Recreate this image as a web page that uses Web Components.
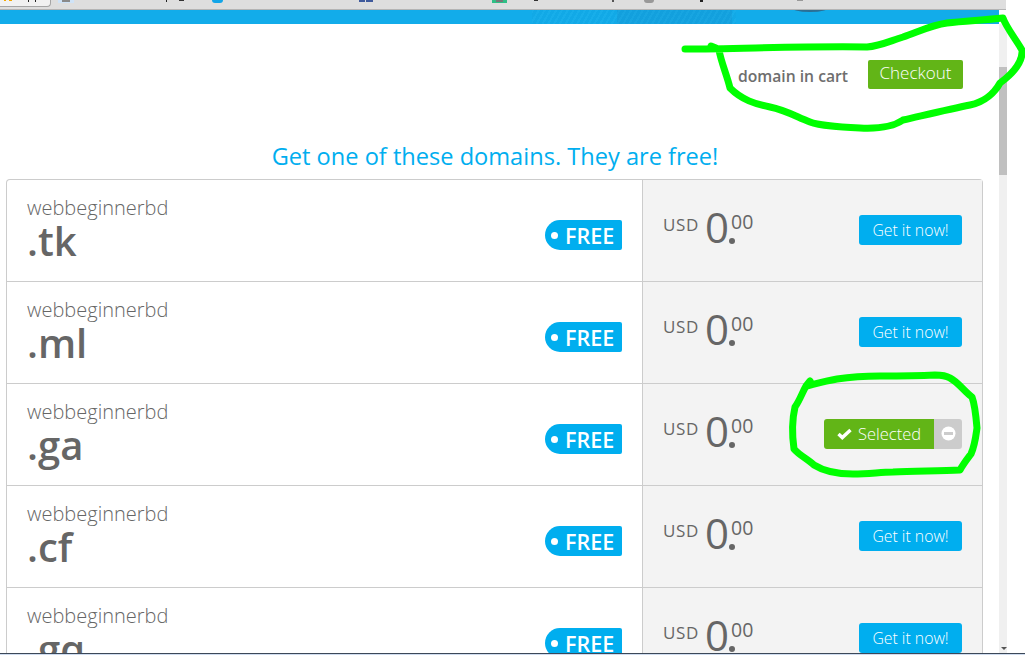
<!DOCTYPE html>
<html>
<head>
<meta charset="utf-8">
<title>Free domains</title>
<style>
	html,body{margin:0;padding:0;background:#fff;}
	body{width:1025px;height:655px;overflow:hidden;position:relative;display:flex;flex-direction:column;font-family:"Open Sans","Liberation Sans",sans-serif;color:#666;}
</style>
</head>
<body>
<top-strip></top-strip>
<blue-band></blue-band>
<page-view>
	<cart-bar></cart-bar>
	<domain-table>
		<domain-row tld=".tk"></domain-row>
		<domain-row tld=".ml"></domain-row>
		<domain-row tld=".ga" selected></domain-row>
		<domain-row tld=".cf"></domain-row>
		<domain-row tld=".gq"></domain-row>
	</domain-table>
</page-view>
<task-edge></task-edge>
<scribble-layer></scribble-layer>

<script>
function def(name, html, init){
	customElements.define(name, class extends HTMLElement {
		constructor(){
			super();
			this.attachShadow({mode:'open'}).innerHTML = html;
		}
		connectedCallback(){
			if(init) init.call(this, this.shadowRoot);
		}
	});
}

// remains of the browser bookmarks bar, cut off by the screenshot
def('top-strip', `<style>
	:host{display:block;height:10px;box-sizing:border-box;background:#dedede;border-bottom:1px solid #b4b4b4;width:1006px;position:relative;overflow:hidden;flex:none;}
	i{position:absolute;top:0;display:block;}
</style>
<i style="left:0;width:50px;height:6px;background:#f1f1f1;border:1px solid #a5a5a5;border-top:0;border-left:0;border-radius:0 0 4px 0;"></i>
<i style="left:4px;width:2px;height:1px;background:#f5a800;"></i>
<i style="left:9px;width:3px;height:1px;background:#f5a800;"></i>
<i style="left:28px;width:1px;height:2px;background:#222;"></i>
<i style="left:35px;width:1px;height:2px;background:#222;"></i>
<i style="left:58px;width:16px;height:3px;background:#cfe3f7;"></i>
<i style="left:62px;width:8px;height:2px;background:#8a8a8a;"></i>
<i style="left:166px;width:1px;height:2px;background:#222;"></i>
<i style="left:179px;width:5px;height:1px;background:#333;"></i>
<i style="left:212px;width:11px;height:3px;background:#12a5e8;border-radius:0 0 6px 6px;"></i>
<i style="left:359px;width:14px;height:2px;background:#3f5a9c;"></i>
<i style="left:365px;width:1px;height:2px;background:#dedede;"></i>
<i style="left:492px;width:15px;height:3px;background:#2fbf86;"></i>
<i style="left:496px;width:7px;height:2px;background:#777;"></i>
<i style="left:534px;width:4px;height:1px;background:#333;"></i>
<i style="left:612px;width:2px;height:2px;background:#555;"></i>
<i style="left:644px;width:10px;height:3px;background:#999;border-radius:0 0 5px 5px;"></i>
<i style="left:700px;width:3px;height:2px;background:#222;"></i>
<i style="left:797px;width:6px;height:1px;background:#999;"></i>
`);

def('blue-band', `<style>
	:host{display:block;height:14px;width:999px;background:#12acea;position:relative;overflow:hidden;flex:none;}
	.tex{position:absolute;left:532px;top:0;width:204px;height:14px;background:repeating-linear-gradient(120deg,rgba(255,255,255,.025) 0 2px,rgba(0,70,120,.03) 2px 5px);}
	.blk{position:absolute;left:617px;top:0;width:115px;height:14px;background:rgba(30,90,150,.1);}
	.arc{position:absolute;left:790px;top:-9px;width:40px;height:11px;background:#2b6f95;border-radius:50%;}
</style><div class="tex"></div><div class="blk"></div><div class="arc"></div>`);

def('page-view', `<style>
	:host{display:flex;flex:1;min-height:0;overflow:hidden;}
	.main{width:999px;flex:none;overflow:hidden;}
	.bar{width:8px;flex:none;background:#f0f0f0;padding-top:43px;box-sizing:border-box;position:relative;}
	.bar b{display:block;width:8px;height:108px;background:#c0c0c0;}
	.bar u{position:absolute;left:2px;bottom:3px;border:3px solid transparent;border-top:3px solid #555;border-bottom:0;}
</style><div class="main"><slot></slot></div><div class="bar"><b></b><u></u></div>`);

def('cart-bar', `<style>
	:host{display:block;height:155px;box-sizing:border-box;}
	.top{display:flex;justify-content:flex-end;align-items:center;height:30px;padding:35px 36px 0 0;gap:20px;}
	span{font-size:15.7px;font-weight:600;color:#6e6e6e;position:relative;top:2px;}
	a{width:95px;height:29px;box-sizing:border-box;background:#62b517;border-radius:2px;color:#fff;font-size:17px;font-weight:300;line-height:25px;text-align:center;}
	h2{margin:0;padding-top:51px;padding-right:9px;text-align:center;font-size:23.6px;font-weight:400;line-height:32px;color:#00aeef;}
</style>
<div class="top"><span>domain in cart</span><a>Checkout</a></div>
<h2>Get one of these domains. They are free!</h2>`);

def('domain-table', `<style>
	:host{display:block;width:977px;margin-left:6px;box-sizing:border-box;border:1px solid #ccc;border-bottom:0;border-radius:4px 4px 0 0;}
</style><slot></slot>`);

def('free-tag', `<style>
	:host{display:flex;align-items:center;width:77px;height:30px;box-sizing:border-box;background:#00aeef;border-radius:15px 2px 2px 15px;color:#fff;font-size:21.5px;font-weight:600;padding-left:6px;gap:7px;}
	i{width:7px;height:7px;border-radius:50%;background:#fff;flex:none;}
</style><i></i><span>FREE</span>`);

def('price-tag', `<style>
	:host{display:flex;align-items:flex-start;color:#666;}
	.cur{font-size:17px;line-height:20px;margin-top:21px;letter-spacing:.6px;width:42px;}
	.int{font-size:42px;line-height:62px;margin-top:2px;width:26px;font-weight:400;}
	.dec{display:flex;flex-direction:column;}
	.dec b{font-weight:400;font-size:19.5px;line-height:20px;margin-top:18px;}
	.dec i{width:6px;height:6px;border-radius:50%;background:#666;margin:6px 0 0 -2px;}
</style><div class="cur">USD</div><div class="int">0</div><div class="dec"><b>00</b><i></i></div>`);

def('get-button', `<style>
	:host{display:block;width:103px;height:30px;background:#00aeef;border-radius:3px;color:#fff;font-size:15.8px;font-weight:300;line-height:30px;text-align:center;}
</style>Get it now!`);

def('selected-button', `<style>
	:host{display:flex;width:138px;height:30px;font-size:16.5px;font-weight:300;color:#fff;}
	.on{width:110px;background:#62b517;border-radius:3px 0 0 3px;display:flex;align-items:center;justify-content:center;gap:6px;}
	.on span{margin-bottom:2px;}
	.off{width:28px;background:#ccc;border-radius:0 3px 3px 0;display:flex;align-items:center;justify-content:center;padding-bottom:1px;box-sizing:border-box;}
</style>
<div class="on"><svg width="15" height="12" viewBox="0 0 15 12"><path d="M1.5 6 L5.3 9.6 L13.5 2" fill="none" stroke="#fff" stroke-width="3.4"/></svg><span>Selected</span></div>
<div class="off"><svg width="15" height="15" viewBox="0 0 15 15"><circle cx="7.5" cy="7.5" r="7" fill="#fff"/><rect x="3" y="6" width="9" height="3" fill="#ccc"/></svg></div>`);

def('domain-row', `<style>
	:host{display:grid;grid-template-columns:636px 1fr;height:102px;box-sizing:border-box;border-bottom:1px solid #ccc;}
	.left{display:flex;justify-content:space-between;padding:15px 20px 0 20px;border-right:1px solid #ccc;}
	.name{font-size:20px;font-weight:300;line-height:26px;color:#666;}
	.tld{font-size:40px;font-weight:600;line-height:44px;color:#666;margin-top:-2px;}
	free-tag{margin-top:25px;}
	.right{background:#f3f3f3;display:flex;justify-content:space-between;padding:0 20px 0 20px;}
	price-tag{margin-top:14px;}
	.act{margin-top:35px;}
</style>
<div class="left">
	<div><div class="name">webbeginnerbd</div><div class="tld"></div></div>
	<free-tag></free-tag>
</div>
<div class="right">
	<price-tag></price-tag>
	<div class="act"></div>
</div>`, function(root){
	root.querySelector('.tld').textContent = this.getAttribute('tld');
	var btn = document.createElement(this.hasAttribute('selected') ? 'selected-button' : 'get-button');
	root.querySelector('.act').appendChild(btn);
});

def('task-edge', `<style>
	:host{display:block;height:2px;background:#cfdcef;border-top:1px solid #3c4858;box-sizing:border-box;flex:none;width:1025px;}
</style>`);

// green marker drawn on top of the screenshot
def('scribble-layer', `<style>
	:host{position:absolute;left:0;top:0;width:1025px;height:655px;pointer-events:none;}
	path{fill:none;stroke:#00ff00;stroke-width:7;stroke-linecap:round;stroke-linejoin:round;}
</style>
<svg width="1025" height="655" viewBox="0 0 1025 655">
	<path d="M685 49 C740 49 800 46 867 47 C880 46 890 41 903 37 C920 31 932 25 947 23 C965 21 985 20 1003 18 C1006 27 1015 38 1022 50 C1023 60 1015 72 1000 83 C995 92 985 102 970 105 C950 109 925 115 903 120 C893 127 880 129 860 128 C840 127 820 126 810 122 C795 116 785 110 770 107 C755 104 742 100 730 88 C727 75 721 62 719 50 M711 46 L716 48"/>
	<path d="M810 381 L806 386 C802 393 800 400 795 407 C792 420 792 435 794 449 C800 456 808 459 814 465 C825 472 840 474 853 474 C870 474 880 472 893 472 C915 471 940 471 960 470 C964 463 968 458 971 454 C975 445 976 435 977 428 C976 416 975 405 972 397 C965 392 958 382 950 378 C945 375 940 375 935 375 C915 376 895 376 880 376 C865 376 850 377 837 379 C825 381 815 384 807 386"/>
</svg>`);
</script>
</body>
</html>
